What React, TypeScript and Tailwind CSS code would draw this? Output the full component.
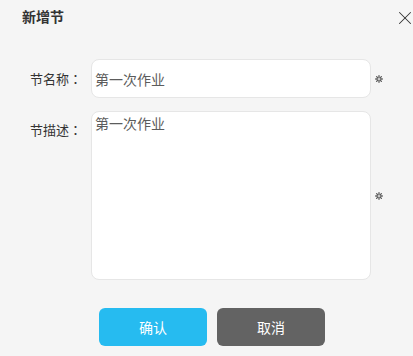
import React from "react";
import { X } from "lucide-react";

const Star: React.FC = () => (
  <svg width="8" height="8" viewBox="0 0 8 8" className="shrink-0">
    <g stroke="#5a5a5a" strokeWidth="1.3" strokeLinecap="round">
      <line x1="4" y1="0.7" x2="4" y2="2.6" />
      <line x1="4" y1="5.4" x2="4" y2="7.3" />
      <line x1="0.7" y1="4" x2="2.6" y2="4" />
      <line x1="5.4" y1="4" x2="7.3" y2="4" />
      <line x1="1.6" y1="1.6" x2="2.9" y2="2.9" />
      <line x1="5.1" y1="5.1" x2="6.4" y2="6.4" />
      <line x1="6.4" y1="1.6" x2="5.1" y2="2.9" />
      <line x1="2.9" y1="5.1" x2="1.6" y2="6.4" />
    </g>
  </svg>
);

const Colon: React.FC = () => (
  <span className="font-['Noto_Sans_CJK_JP',sans-serif]">：</span>
);

const App: React.FC = () => {
  return (
    <div className="w-[413px] h-[356px] bg-[#f5f5f5] font-['Noto_Sans_CJK_SC','Noto_Sans',sans-serif] text-[#333] overflow-hidden">
      <div className="flex items-center justify-between pl-[22px] pt-[6px] h-[26px]">
        <span className="text-[14px] leading-5 font-bold text-[#333]">新增节</span>
        <X size={22} strokeWidth={1.1} className="mt-[4px] mr-[-3px] text-[#333]" />
      </div>

      <div className="mt-[33px] flex items-center">
        <label className="w-[82px] text-right text-[13px] leading-5 text-[#333]">
          节名称<Colon />
        </label>
        <input
          readOnly
          value="第一次作业"
          className="ml-[9px] w-[280px] h-[39px] rounded-[8px] border border-[#e6e6e6] bg-white px-[3px] text-[14px] text-[#5c5c5c] outline-none"
        />
        <span className="ml-[4px]">
          <Star />
        </span>
      </div>

      <div className="mt-[13px] flex items-center">
        <label className="self-start mt-[9px] w-[82px] text-right text-[13px] leading-5 text-[#333]">
          节描述<Colon />
        </label>
        <textarea
          readOnly
          value="第一次作业"
          className="ml-[9px] w-[280px] h-[169px] resize-none rounded-[8px] border border-[#e6e6e6] bg-white px-[3px] py-[1px] text-[14px] leading-5 text-[#5c5c5c] outline-none"
        />
        <span className="ml-[4px]">
          <Star />
        </span>
      </div>

      <div className="mt-[28px] ml-[99px] flex gap-[10px]">
        <button className="w-[108px] h-[38px] rounded-[6px] bg-[#26bbf0] text-white text-[14px]">确认</button>
        <button className="w-[108px] h-[38px] rounded-[6px] bg-[#636363] text-white text-[14px]">取消</button>
      </div>
    </div>
  );
};

export default App;
